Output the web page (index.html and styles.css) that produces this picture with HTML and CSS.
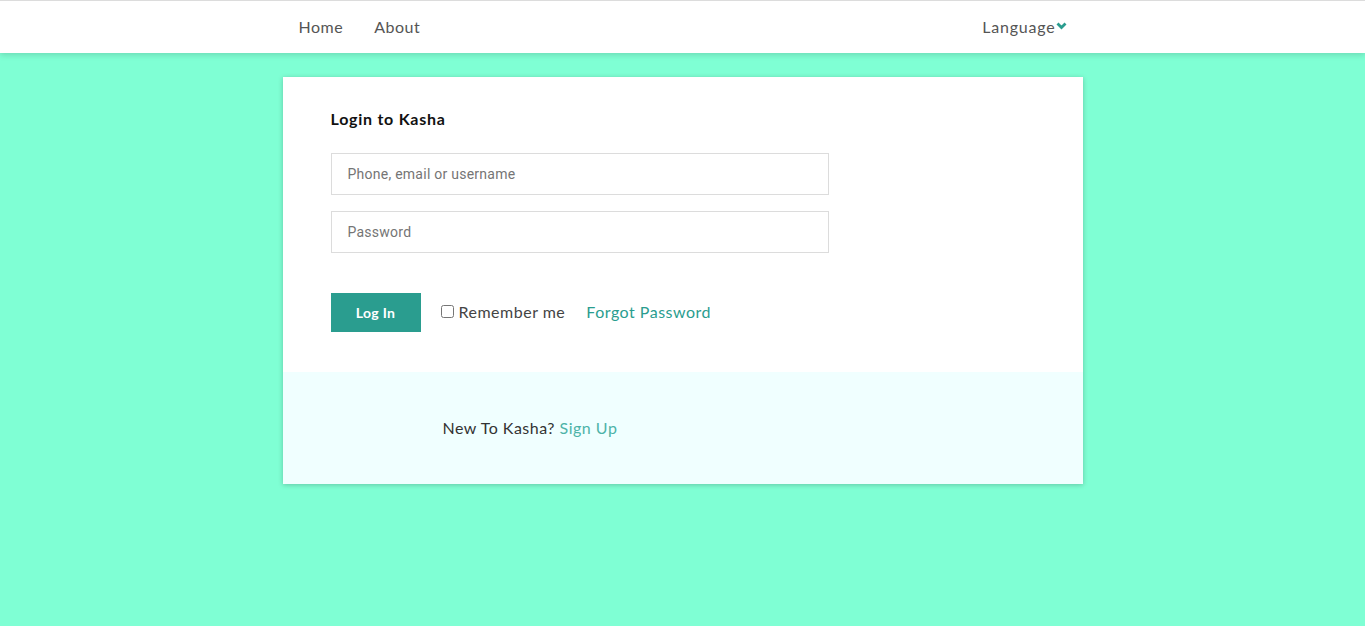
FILE: index.html
```html
<!DOCTYPE html>
<html>
<head>
<meta charset="utf-8">
<link rel="stylesheet" href="styles.css">
</head>
<body>
<header class="topbar">
  <nav class="nav">
    <div class="nav-left">
      <a class="nav-link" href="#">Home</a>
      <a class="nav-link" href="#">About</a>
    </div>
    <div class="nav-right">
      <a class="nav-link lang" href="#">Language<svg class="chev" width="11" height="8" viewBox="0 0 11 8"><path d="M1.5 1.5 L5.5 5.5 L9.5 1.5" fill="none" stroke="#2a9d8f" stroke-width="2.8"/></svg></a>
    </div>
  </nav>
</header>
<main class="page">
  <section class="card">
    <div class="card-body">
      <h1 class="title">Login to Kasha</h1>
      <form class="form">
        <input class="field" type="text" placeholder="Phone, email or username">
        <input class="field" type="password" placeholder="Password">
        <div class="actions">
          <button class="btn" type="button">Log In</button>
          <label class="remember"><input type="checkbox" class="check">Remember me</label>
          <a class="forgot" href="#">Forgot Password</a>
        </div>
      </form>
    </div>
    <div class="card-foot">
      <span class="new">New To Kasha? <a class="signup" href="#">Sign Up</a></span>
    </div>
  </section>
</main>
</body>
</html>
```
FILE: styles.css
```css
html, body {
  margin: 0;
  padding: 0;
}
body {
  background: #7fffd4;
  font-family: "Lato", "Noto Sans", sans-serif;
  letter-spacing: 0.5px;
  min-height: 626px;
}
.topbar {
  background: #fff;
  border-top: 1px solid #dcdcdc;
  height: 52px;
  box-shadow: 0 2px 6px rgba(0,0,0,0.15);
  position: relative;
}
.nav {
  width: 800px;
  margin: 0 auto;
  box-sizing: border-box;
  padding: 0 16px;
  height: 52px;
  display: flex;
  align-items: center;
  justify-content: space-between;
}
.nav-left {
  display: flex;
  gap: 31px;
}
.nav-link {
  color: #555;
  text-decoration: none;
  font-size: 16px;
  line-height: 20px;
}
.lang {
  display: flex;
  align-items: center;
  letter-spacing: 0.8px;
}
.chev {
  margin-left: 0;
  margin-top: -2px;
}
.page {
  padding-top: 24px;
}
.card {
  width: 800px;
  margin: 0 auto;
  background: #fff;
  box-shadow: 0 1px 5px rgba(0,0,0,0.22);
}
.card-body {
  padding: 32px 48px 40px;
}
.title {
  margin: 0 0 24px;
  font-size: 16px;
  font-weight: bold;
  color: #111;
  line-height: 20px;
  letter-spacing: 0.75px;
}
.form {
  display: flex;
  flex-direction: column;
}
.field {
  width: 498px;
  height: 42px;
  box-sizing: border-box;
  border: 1px solid #dcdcdc;
  padding: 0 16px;
  font-family: "Roboto", sans-serif;
  font-size: 14px;
  letter-spacing: 0.25px;
  color: #333;
  margin: 0 0 16px;
  outline: none;
}
.field::placeholder {
  color: #757575;
}
.actions {
  display: flex;
  align-items: center;
  margin-top: 24px;
}
.btn {
  width: 90px;
  height: 39px;
  background: #2a9d8f;
  color: #fff;
  border: none;
  font-family: inherit;
  letter-spacing: 0.3px;
  font-weight: bold;
  font-size: 14px;
  padding: 0;
  margin-right: 20px;
}
.remember {
  display: flex;
  align-items: center;
  font-size: 16px;
  color: #444;
  margin-right: 21px;
  margin-bottom: 2px;
}
.check {
  margin: 0 5px 0 0;
  width: 13px;
  height: 13px;
}
.forgot {
  color: #2a9d8f;
  text-decoration: none;
  font-size: 16px;
  margin-bottom: 2px;
}
.card-foot {
  background: #f0ffff;
  height: 112px;
  box-sizing: border-box;
  padding-left: 160px;
  padding-bottom: 2px;
  display: flex;
  align-items: center;
}
.new {
  font-size: 16px;
  color: #333;
}
.signup {
  color: #4db3a8;
  text-decoration: none;
}
```
